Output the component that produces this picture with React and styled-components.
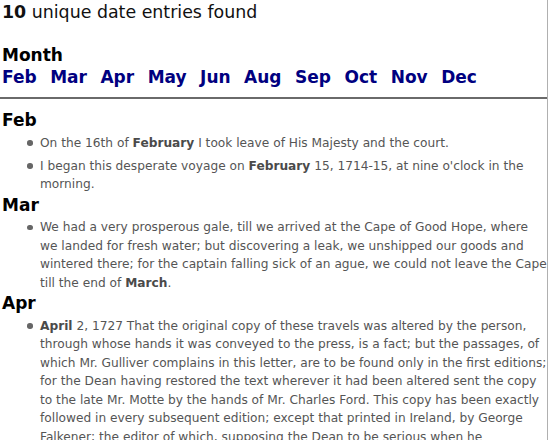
import React from "react";
import styled, { createGlobalStyle } from "styled-components";

const GlobalStyle = createGlobalStyle`
    html, body {
        margin: 0;
        padding: 0;
        background: #fff;
    }
    body {
        font-family: "DejaVu Sans", Verdana, sans-serif;
    }
`;

const Page = styled.div`
    width: 547px;
    height: 440px;
    overflow: hidden;
    border-right: 1px solid #b0b0b0;
    background: #fff;
`;

const Summary = styled.div`
    padding: 2px 0 0 2px;
    font-size: 17.4px;
    color: #111;
    line-height: 20px;

    b {
        font-weight: bold;
    }
`;

const MonthNav = styled.div`
    margin-top: 22px;
    padding-left: 2px;
`;

const NavTitle = styled.div`
    font-size: 17px;
    font-weight: bold;
    color: #000;
    line-height: 22px;
`;

const NavLinks = styled.div`
    display: flex;
    gap: 13.5px;
    line-height: 22px;
`;

const NavLink = styled.a`
    font-size: 17px;
    font-weight: bold;
    color: #000080;
    text-decoration: none;
`;

const Rule = styled.hr`
    margin: 9px 0 10px;
    border: none;
    border-top: 2px solid #6a6a6a;
    height: 0;
`;

const Section = styled.section`
    padding-left: 2px;
`;

const MonthTitle = styled.h2`
    margin: 0 0 2.6px;
    font-size: 17px;
    font-weight: bold;
    color: #000;
    line-height: 22px;
`;

const EntryList = styled.ul`
    margin: 0;
    padding: 0 0 0 38px;
    list-style: none;
`;

const Entry = styled.li`
    position: relative;
    font-size: 12.2px;
    line-height: 18.5px;
    color: #555;

    & + & {
        margin-top: 4.5px;
    }

    b {
        color: #4a4a4a;
    }

    &::before {
        content: "";
        position: absolute;
        left: -13px;
        top: 6.5px;
        width: 5.5px;
        height: 5.5px;
        border-radius: 50%;
        background: #666;
    }
`;

const months = ["Feb", "Mar", "Apr", "May", "Jun", "Aug", "Sep", "Oct", "Nov", "Dec"];

const sections = [
    {
        title: "Feb",
        entries: [
            <>On the 16th of <b>February</b> I took leave of His Majesty and the court.</>,
            <>I began this desperate voyage on <b>February</b> 15, 1714-15, at nine o'clock in the morning.</>,
        ],
    },
    {
        title: "Mar",
        entries: [
            <>We had a very prosperous gale, till we arrived at the Cape of Good Hope, where we landed for fresh water; but discovering a leak, we unshipped our goods and wintered there; for the captain falling sick of an ague, we could not leave the Cape till the end of <b>March</b>.</>,
        ],
    },
    {
        title: "Apr",
        entries: [
            <><b>April</b> 2, 1727 That the original copy of these travels was altered by the person, through whose hands it was conveyed to the press, is a fact; but the passages, of which Mr. Gulliver complains in this letter, are to be found only in the first editions; for the Dean having restored the text wherever it had been altered sent the copy to the late Mr. Motte by the hands of Mr. Charles Ford. This copy has been exactly followed in every subsequent edition; except that printed in Ireland, by George Falkener; the editor of which, supposing the Dean to be serious when he complained of alterations, restored the text.</>,
        ],
    },
];

const App = () => {
    return (
        <Page>
            <GlobalStyle />
            <Summary>
                <b>10</b> unique date entries found
            </Summary>
            <MonthNav>
                <NavTitle>Month</NavTitle>
                <NavLinks>
                    {months.map((m) => (
                        <NavLink key={m} href={`#${m}`}>
                            {m}
                        </NavLink>
                    ))}
                </NavLinks>
            </MonthNav>
            <Rule />
            {sections.map((s) => (
                <Section key={s.title} id={s.title}>
                    <MonthTitle>{s.title}</MonthTitle>
                    <EntryList>
                        {s.entries.map((e, i) => (
                            <Entry key={i}>{e}</Entry>
                        ))}
                    </EntryList>
                </Section>
            ))}
        </Page>
    );
};

export default App;
